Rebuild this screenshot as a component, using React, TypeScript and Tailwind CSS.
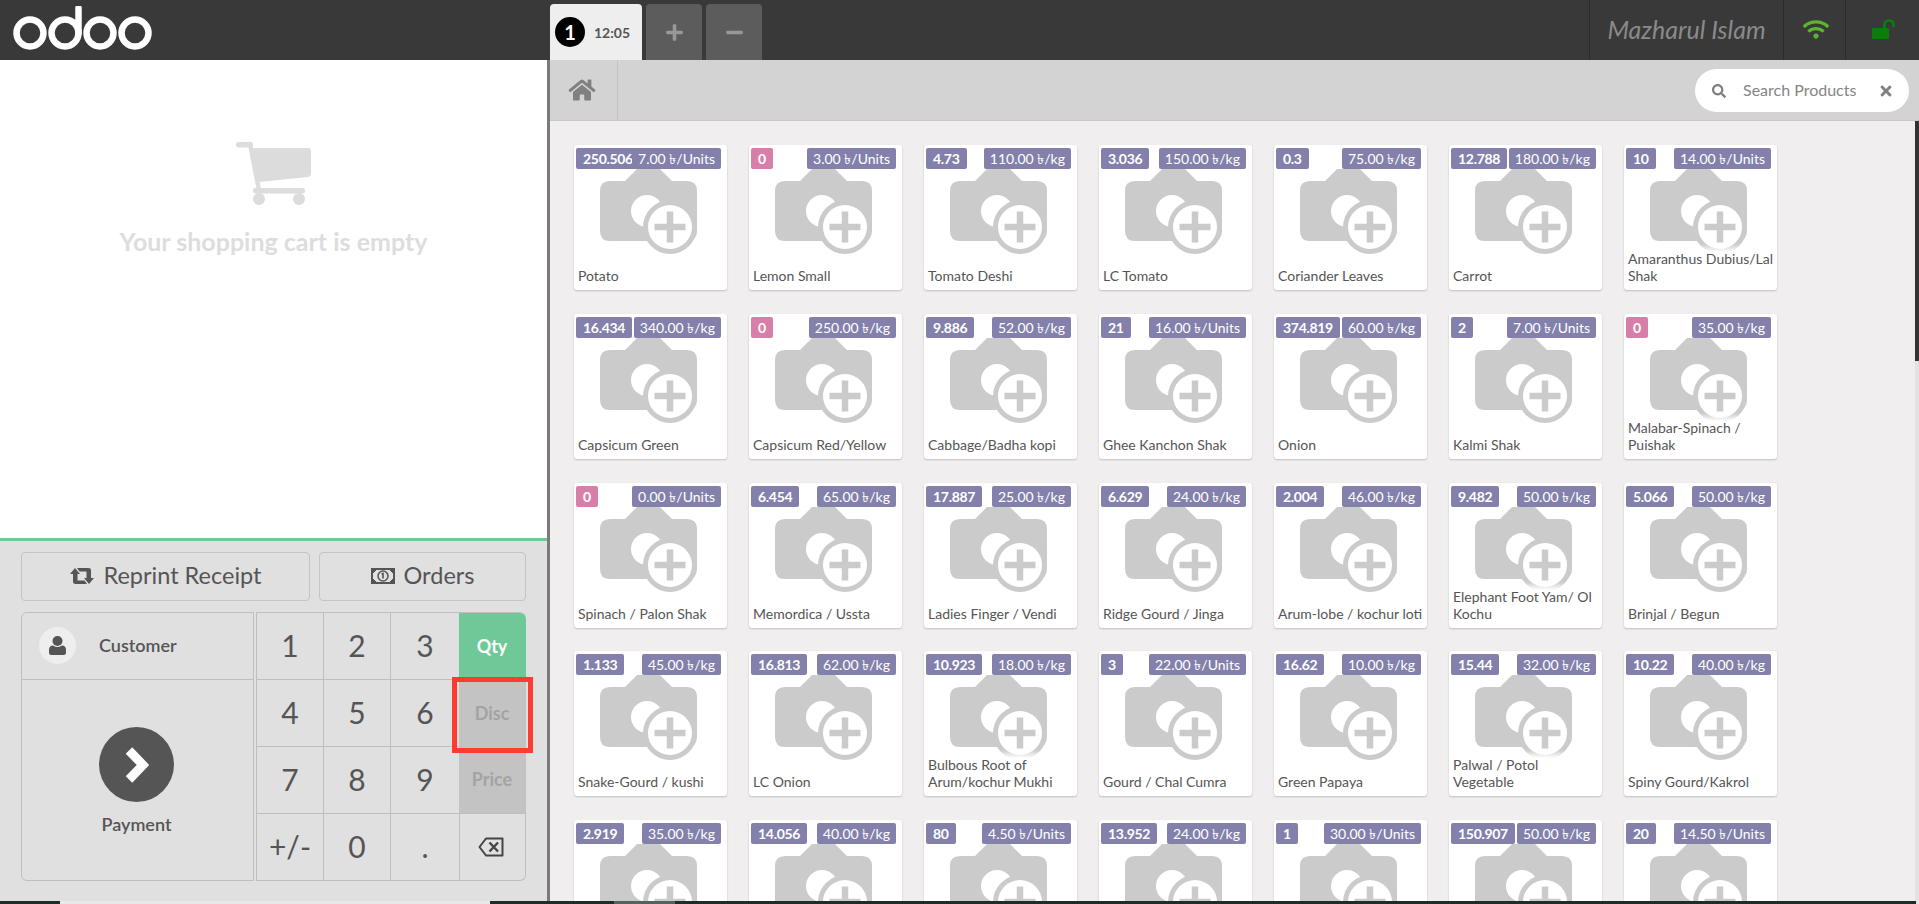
// Odoo POS screen: order panel on the left, product grid on the right.
import { FaHome, FaMinus, FaPlus, FaSearch, FaTimes, FaWifi } from "react-icons/fa";

interface Producto {
  stock: string;
  precio: string;
  unidad: "Units" | "kg";
  nombre: string;
}

function p(stock: string, precio: string, unidad: "Units" | "kg", nombre: string): Producto {
  return { stock, precio, unidad, nombre };
}

const PRODUCTOS: Producto[] = [
  p("250.506", "7.00", "Units", "Potato"),
  p("0", "3.00", "Units", "Lemon Small"),
  p("4.73", "110.00", "kg", "Tomato Deshi"),
  p("3.036", "150.00", "kg", "LC Tomato"),
  p("0.3", "75.00", "kg", "Coriander Leaves"),
  p("12.788", "180.00", "kg", "Carrot"),
  p("10", "14.00", "Units", "Amaranthus Dubius/Lal Shak"),
  p("16.434", "340.00", "kg", "Capsicum Green"),
  p("0", "250.00", "kg", "Capsicum Red/Yellow"),
  p("9.886", "52.00", "kg", "Cabbage/Badha kopi"),
  p("21", "16.00", "Units", "Ghee Kanchon Shak"),
  p("374.819", "60.00", "kg", "Onion"),
  p("2", "7.00", "Units", "Kalmi Shak"),
  p("0", "35.00", "kg", "Malabar-Spinach / Puishak"),
  p("0", "0.00", "Units", "Spinach / Palon Shak"),
  p("6.454", "65.00", "kg", "Memordica / Ussta"),
  p("17.887", "25.00", "kg", "Ladies Finger / Vendi"),
  p("6.629", "24.00", "kg", "Ridge Gourd / Jinga"),
  p("2.004", "46.00", "kg", "Arum-lobe / kochur loti"),
  p("9.482", "50.00", "kg", "Elephant Foot Yam/ Ol Kochu"),
  p("5.066", "50.00", "kg", "Brinjal / Begun"),
  p("1.133", "45.00", "kg", "Snake-Gourd / kushi"),
  p("16.813", "62.00", "kg", "LC Onion"),
  p("10.923", "18.00", "kg", "Bulbous Root of Arum/kochur Mukhi"),
  p("3", "22.00", "Units", "Gourd / Chal Cumra"),
  p("16.62", "10.00", "kg", "Green Papaya"),
  p("15.44", "32.00", "kg", "Palwal / Potol Vegetable"),
  p("10.22", "40.00", "kg", "Spiny Gourd/Kakrol"),
  p("2.919", "35.00", "kg", ""),
  p("14.056", "40.00", "kg", ""),
  p("80", "4.50", "Units", ""),
  p("13.952", "24.00", "kg", ""),
  p("1", "30.00", "Units", ""),
  p("150.907", "50.00", "kg", ""),
  p("20", "14.50", "Units", ""),
];

function OdooLogo() {
  return (
    <svg width="140" height="44" viewBox="0 0 140 44" fill="none" stroke="#fff" strokeWidth="6.5">
      <circle cx="17" cy="27" r="13.5" />
      <circle cx="52" cy="27" r="13.5" />
      <path d="M65.5 27V2" strokeLinecap="round" />
      <circle cx="87" cy="27" r="13.5" />
      <circle cx="122" cy="27" r="13.5" />
    </svg>
  );
}

function CameraPlaceholder() {
  return (
    <svg width="97" height="85" viewBox="0 0 97 85" className="blur-[0.4px]">
      <path
        d="M10 12H25L37 0H60L72 12H87Q97 12 97 22V62Q97 72 87 72H10Q0 72 0 62V22Q0 12 10 12Z"
        fill="#cbcbcb"
      />
      <circle cx="47" cy="42" r="16" fill="#fff" />
      <circle cx="70" cy="58" r="27" fill="#cbcbcb" />
      <circle cx="70" cy="58" r="22" fill="#fff" />
      <path d="M54.5 58H85.5M70 42.5V73.5" stroke="#cbcbcb" strokeWidth="6.5" />
    </svg>
  );
}

function CartIcon() {
  return (
    <svg width="75" height="63" viewBox="0 0 75 63" fill="#dcdcdc">
      <rect x="0" y="0" width="17" height="5.5" rx="2.7" />
      <path d="M12 3H16.5L25 47H20.5Z" />
      <path d="M16 6H72Q75 6 75 9V31Q75 34 72 35L23 40Z" />
      <rect x="17" y="46" width="52" height="5.5" rx="2.7" />
      <circle cx="23" cy="57" r="6" />
      <circle cx="63" cy="57" r="6" />
    </svg>
  );
}

function RetweetIcon() {
  return (
    <svg width="24" height="16" viewBox="0 0 24 16" fill="currentColor">
      <path d="M0 6L5 0L10 6H7.5V12.5H14.5L17 16H5.5Q3 16 3 14V6Z" />
      <path d="M24 10L19 16L14 10H16.5V3.5H9.5L7 0H18.5Q21 0 21 2V10Z" />
    </svg>
  );
}

function MoneyIcon() {
  return (
    <svg width="24" height="16" viewBox="0 0 24 16" fill="none" stroke="currentColor">
      <rect x="1" y="1" width="22" height="14" strokeWidth="2" />
      <path d="M1 1H6L1 6ZM23 1H18L23 6ZM1 15H6L1 10ZM23 15H18L23 10Z" fill="currentColor" strokeWidth="1" />
      <circle cx="12" cy="8" r="5" strokeWidth="1.5" />
      <path d="M10.5 6L12 5.5V10.5" strokeWidth="1.6" />
    </svg>
  );
}

function UserIcon() {
  return (
    <svg width="17" height="19" viewBox="0 0 17 19" fill="#555555">
      <circle cx="8.5" cy="5" r="5" />
      <path d="M0 16.5V14Q0 9.5 4 9.5Q8.5 12.5 13 9.5Q17 9.5 17 14V16.5Q17 19 14.5 19H2.5Q0 19 0 16.5Z" />
    </svg>
  );
}

function UnlockIcon() {
  return (
    <svg width="23" height="20" viewBox="0 0 23 20" fill="none">
      <rect x="0" y="9" width="17" height="11" rx="1" fill="#0b7d0b" />
      <path d="M12.5 10V6Q12.5 1.5 17 1.5Q21.5 1.5 21.5 6V8" stroke="#0b7d0b" strokeWidth="2.6" />
    </svg>
  );
}

function ChevronIcon() {
  return (
    <svg width="24" height="36" viewBox="0 0 24 36" fill="none" stroke="#fff" strokeWidth="9">
      <path d="M4 3.5L18 18L4 32.5" />
    </svg>
  );
}

function BackspaceIcon() {
  return (
    <svg width="26" height="20" viewBox="0 0 26 20" fill="none" stroke="#444444" strokeWidth="2">
      <path d="M8 1.5H24.5V18.5H8L1.5 10Z" strokeLinejoin="round" />
      <path d="M11.5 5.5L20 14.5M20 5.5L11.5 14.5" strokeWidth="2.4" />
    </svg>
  );
}

function TarjetaProducto({ item }: { item: Producto }) {
  const sinStock = item.stock === "0";
  return (
    <div className="relative w-[153px] h-[145px] bg-white rounded-[3px] shadow-[0_1px_2px_rgba(0,0,0,0.2)] overflow-hidden">
      <div className="absolute left-[26px] top-[24px]">
        <CameraPlaceholder />
      </div>
      <span
        className={`absolute left-[2px] top-[3px] h-[21px] px-[7px] rounded-[2px] font-bold text-[14px] tracking-[-0.3px] leading-[21px] text-white ${
          sinStock ? "bg-[#d87fa9]" : "bg-[#8381ab]"
        }`}
      >
        {item.stock}
      </span>
      <span className="absolute right-[6px] top-[3px] h-[21px] px-[6px] rounded-[2px] bg-[#8381ab] text-[14px] leading-[21px] text-white whitespace-nowrap">
        {item.precio} ৳/{item.unidad}
      </span>
      <div className="absolute left-0 right-0 bottom-[6px] pl-[4px] pt-[6px] text-[14px] leading-[17px] text-[#555555] bg-gradient-to-b from-transparent to-white to-[8px]">
        {item.nombre}
      </div>
    </div>
  );
}

function Tecla({ children, className = "" }: { children: React.ReactNode; className?: string }) {
  return (
    <div className={`relative flex items-center justify-center border-l border-b border-[#bfbfbf] ${className}`}>
      {children}
    </div>
  );
}

function Numpad() {
  const digito = "text-[30px] text-[#555555] pb-[2px]";
  const modo = "text-[18px] font-bold pb-[1px] pr-[1px]";
  const apagado = `${modo} bg-[#c3c3c3] text-[#a3a3a3]`;
  return (
    <div className="grid grid-cols-[67px_67px_69px_67px] grid-rows-[67px_67px_67px_67px] w-[270px] border-t border-[#bfbfbf] rounded-r-[6px]">
      <Tecla className={digito}>1</Tecla>
      <Tecla className={digito}>2</Tecla>
      <Tecla className={digito}>3</Tecla>
      <Tecla className={`${modo} bg-[#6ec898] text-white border-l-0 border-b-0 rounded-tr-[6px]`}>Qty</Tecla>
      <Tecla className={digito}>4</Tecla>
      <Tecla className={digito}>5</Tecla>
      <Tecla className={digito}>6</Tecla>
      <Tecla className={`${apagado} border-l-0 border-b-0`}>
        Disc
        <span className="absolute z-10 -left-[7px] -right-[7px] -top-[3px] -bottom-[6px] border-[5px] border-[#ff3a30]" />
      </Tecla>
      <Tecla className={digito}>7</Tecla>
      <Tecla className={digito}>8</Tecla>
      <Tecla className={digito}>9</Tecla>
      <Tecla className={`${apagado} border-l-0`}>Price</Tecla>
      <Tecla className={digito}>+/-</Tecla>
      <Tecla className={digito}>0</Tecla>
      <Tecla className={digito}>.</Tecla>
      <Tecla className="border-r rounded-br-[6px] pr-[4px]">
        <BackspaceIcon />
      </Tecla>
    </div>
  );
}

function PanelOrden() {
  return (
    <div className="w-[547px] flex flex-col shrink-0">
      <div className="h-[478px] bg-white flex flex-col items-center pt-[82px]">
        <CartIcon />
        <p className="mt-[21px] text-[25px] leading-[30px] font-bold text-[#dddddd]">Your shopping cart is empty</p>
      </div>
      <div className="flex-1 bg-[#e0e0e0] border-t-[3px] border-[#6ec898] px-[21px] pt-[11px]">
        <div className="flex gap-[9px] text-[23.5px] text-[#555555]">
          <button className="w-[289px] h-[49px] pb-[1px] flex items-center justify-center gap-[10px] border border-[#c4c4c4] rounded-[4px]">
            <RetweetIcon />
            Reprint Receipt
          </button>
          <button className="flex-1 h-[49px] pb-[1px] flex items-center justify-center gap-[9px] border border-[#c4c4c4] rounded-[4px]">
            <MoneyIcon />
            Orders
          </button>
        </div>
        <div className="flex justify-between mt-[11px] w-[505px]">
          <div className="w-[233px] h-[269px] flex flex-col border border-[#bfbfbf] rounded-l-[6px] text-[#555555] text-[18px] font-semibold">
            <div className="h-[67px] flex items-center pl-[17px] pb-[1px] border-b border-[#bfbfbf]">
              <span className="w-[37px] h-[37px] rounded-full bg-[#eeeeee] flex items-center justify-center">
                <UserIcon />
              </span>
              <span className="ml-[23px]">Customer</span>
            </div>
            <div className="flex-1 flex flex-col items-center pt-[47px] pr-[2px]">
              <span className="w-[75px] h-[75px] rounded-full bg-[#555555] flex items-center justify-center">
                <ChevronIcon />
              </span>
              <span className="mt-[9px]">Payment</span>
            </div>
          </div>
          <Numpad />
        </div>
      </div>
    </div>
  );
}

function BarraSuperior() {
  return (
    <header className="h-[60px] bg-[#393939] flex shrink-0">
      <div className="w-[550px] pl-[13px] pt-[6px]">
        <OdooLogo />
      </div>
      <div className="flex items-end gap-[4px]">
        <div className="w-[92px] h-[56px] bg-[#eeeeee] rounded-t-[4px] flex items-center pl-[5px] gap-[9px]">
          <span className="w-[30px] h-[30px] rounded-full bg-black text-white text-[20px] font-bold flex items-center justify-center">
            1
          </span>
          <span className="text-[14px] font-bold text-[#555555]">12:05</span>
        </div>
        <div className="w-[56px] h-[56px] bg-[#5c5c5c] rounded-t-[4px] flex items-center justify-center text-[#989898]">
          <FaPlus className="w-[19px] h-[19px]" />
        </div>
        <div className="w-[56px] h-[56px] bg-[#5c5c5c] rounded-t-[4px] flex items-center justify-center text-[#989898]">
          <FaMinus className="w-[19px] h-[19px]" />
        </div>
      </div>
      <div className="ml-auto flex h-full">
        <div className="w-[194px] border-l border-[#2b2b2b] flex items-center justify-center italic text-[25px] text-[#8a8a8a]">
          Mazharul Islam
        </div>
        <div className="w-[62px] border-l border-[#2b2b2b] flex items-center justify-center pl-[3px] pb-[2px]">
          <FaWifi className="w-[28px] h-[21px] text-[#5cb531]" />
        </div>
        <div className="w-[74px] border-l border-[#2b2b2b] flex items-center justify-center pl-[1px] pb-[2px]">
          <UnlockIcon />
        </div>
      </div>
    </header>
  );
}

function BarraBusqueda() {
  return (
    <div className="h-[61px] bg-[#d3d3d3] border-b border-[#c7c7c7] flex items-stretch shrink-0">
      <div className="w-[68px] border-r border-[#c4c4c4] flex items-center justify-center pr-[3px]">
        <FaHome className="w-[28px] h-[24px] text-[#808080]" />
      </div>
      <div className="ml-auto mr-[10px] my-[9px] w-[214px] h-[43px] bg-white rounded-full flex items-center pl-[17px] pr-[16px] text-[#808080]">
        <FaSearch className="w-[14px] h-[14px]" />
        <span className="ml-[17px] pb-[1px] text-[16px] text-[#858585]">Search Products</span>
        <FaTimes className="ml-auto w-[14px] h-[16px]" />
      </div>
    </div>
  );
}

export default function App() {
  return (
    <div className="h-[904px] overflow-hidden flex flex-col font-['Lato','Noto_Sans',sans-serif] bg-[#f0eeee]">
      <BarraSuperior />
      <div className="flex-1 flex min-h-0">
        <PanelOrden />
        <div className="w-[3px] bg-[#7a7a7a] shrink-0" />
        <div className="flex-1 min-w-0 flex flex-col">
          <BarraBusqueda />
          <div className="flex-1 min-h-0 flex">
            <div className="flex-1 overflow-hidden pl-[24px] pt-[24px] flex flex-wrap content-start gap-x-[22px] gap-y-[23.75px]">
              {PRODUCTOS.map((item, i) => (
                <TarjetaProducto key={i} item={item} />
              ))}
            </div>
            <div className="w-[4px] bg-[#e2e2e2] shrink-0">
              <div className="h-[240px] bg-[#333333]" />
            </div>
          </div>
        </div>
      </div>
      <div className="h-[3px] flex shrink-0 bg-[#1e2d25]">
        <div className="w-[60px]" />
        <div className="w-[430px] bg-[#e8e8e8]" />
        <div className="w-[124px]" />
        <div className="w-[61px] bg-[#56625c]" />
        <div className="flex-1" />
        <div className="w-[3px] bg-[#e2e2e2]" />
      </div>
    </div>
  );
}
